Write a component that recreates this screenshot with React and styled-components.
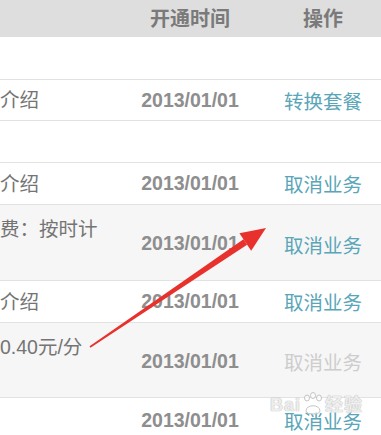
import styled, { createGlobalStyle } from "styled-components";

const GlobalStyle = createGlobalStyle`
  html, body {
    margin: 0;
    padding: 0;
    background: #fff;
  }
  body {
    font-family: "Liberation Sans", "Noto Sans CJK SC", sans-serif;
    overflow: hidden;
  }
`;

const Page = styled.div`
  position: relative;
  width: 381px;
  height: 435px;
  overflow: hidden;
  background: #fff;
`;

const Row = styled.div`
  display: grid;
  grid-template-columns: 115px 150px 116px;
  box-sizing: border-box;
  height: ${(p) => p.height}px;
  background: ${(p) => (p.shaded ? "#f6f6f6" : "#fff")};
  border-bottom: ${(p) => (p.last ? "none" : "1px solid #e2e2e2")};
`;

const HeaderRow = styled(Row)`
  background: #dedede;
  border-bottom: none;
`;

const HeaderCell = styled.div`
  display: flex;
  align-items: center;
  justify-content: center;
  font-size: 20px;
  font-weight: 700;
  color: #7a7a7a;
  padding-bottom: 2px;
`;

const InfoCell = styled.div`
  display: flex;
  align-items: ${(p) => (p.top ? "flex-start" : "center")};
  padding-top: ${(p) => (p.top ? 12 : 0)}px;
  font-size: 19.5px;
  line-height: 24px;
  color: #747474;
  white-space: nowrap;
`;

const DateCell = styled.div`
  display: flex;
  align-items: center;
  justify-content: center;
  font-size: 19.5px;
  font-weight: 700;
  color: #8e8e8e;
  padding-top: ${(p) => (p.offset ? 2 : 0)}px;
`;

const ActionCell = styled.div`
  display: flex;
  align-items: center;
  justify-content: center;
  font-size: 19.5px;
  color: ${(p) => (p.disabled ? "#cdcdcd" : "#5aa6b8")};
  padding-top: ${(p) => (p.offset ? 3 : 0)}px;
`;

const Arrow = styled.svg`
  position: absolute;
  left: 0;
  top: 0;
  pointer-events: none;
`;

const Watermark = styled.div`
  position: absolute;
  left: 270px;
  top: 390px;
  display: flex;
  align-items: flex-end;
  font-size: 18px;
  font-weight: 700;
  color: rgba(255, 255, 255, 0.75);
  text-shadow: 0 0 1px #b8b8b8, 0 0 1px #b8b8b8;
  letter-spacing: 1px;
`;

const Paw = styled.svg`
  margin: 0 1px;
`;

const rows = [
  { h: 43 },
  { h: 41, info: "介绍", date: "2013/01/01", action: "转换套餐" },
  { h: 42 },
  { h: 42, info: "介绍", date: "2013/01/01", action: "取消业务" },
  { h: 76, shaded: true, tall: true, info: "费：按时计", date: "2013/01/01", action: "取消业务" },
  { h: 42, info: "介绍", date: "2013/01/01", action: "取消业务" },
  { h: 75, shaded: true, tall: true, info: "0.40元/分", date: "2013/01/01", action: "取消业务", disabled: true },
  { h: 44, last: true, date: "2013/01/01", action: "取消业务" },
];

function ArrowMark() {
  const tail = [90, 347];
  const tip = [266, 228];
  const dx = tip[0] - tail[0];
  const dy = tip[1] - tail[1];
  const len = Math.hypot(dx, dy);
  const u = [dx / len, dy / len];
  const n = [-u[1], u[0]];
  const base = [tip[0] - 25 * u[0], tip[1] - 25 * u[1]];
  const pt = (p, k) => `${p[0] + k * n[0]},${p[1] + k * n[1]}`;
  const shaft = [pt(tail, 0.8), pt(base, 3.2), pt(base, -3.2), pt(tail, -0.8)].join(" ");
  const head = [`${tip[0]},${tip[1]}`, pt(base, 10.5), pt(base, -10.5)].join(" ");
  return (
    <Arrow width="381" height="435" viewBox="0 0 381 435">
      <polygon points={shaft} fill="#e8312d" />
      <polygon points={head} fill="#e8312d" />
    </Arrow>
  );
}

export default function App() {
  return (
    <Page>
      <GlobalStyle />
      <HeaderRow height={37}>
        <HeaderCell />
        <HeaderCell>开通时间</HeaderCell>
        <HeaderCell>操作</HeaderCell>
      </HeaderRow>
      {rows.map((r, i) => (
        <Row key={i} height={r.h} shaded={r.shaded} last={r.last}>
          <InfoCell top={r.tall}>{r.info}</InfoCell>
          <DateCell offset={r.tall}>{r.date}</DateCell>
          <ActionCell offset={r.tall} disabled={r.disabled}>
            {r.action}
          </ActionCell>
        </Row>
      ))}
      <ArrowMark />
      <Watermark>
        Bai
        <Paw width="22" height="24" viewBox="0 0 22 24">
          <g fill="rgba(255,255,255,0.7)" stroke="#c4c4c4" strokeWidth="1">
            <ellipse cx="5" cy="6" rx="2.5" ry="3" />
            <ellipse cx="11" cy="3.5" rx="2.5" ry="3" />
            <ellipse cx="17" cy="6" rx="2.5" ry="3" />
            <path d="M4 19 C4 12 18 12 18 19 C18 23 4 23 4 19 Z" />
          </g>
        </Paw>
        经验
      </Watermark>
    </Page>
  );
}
